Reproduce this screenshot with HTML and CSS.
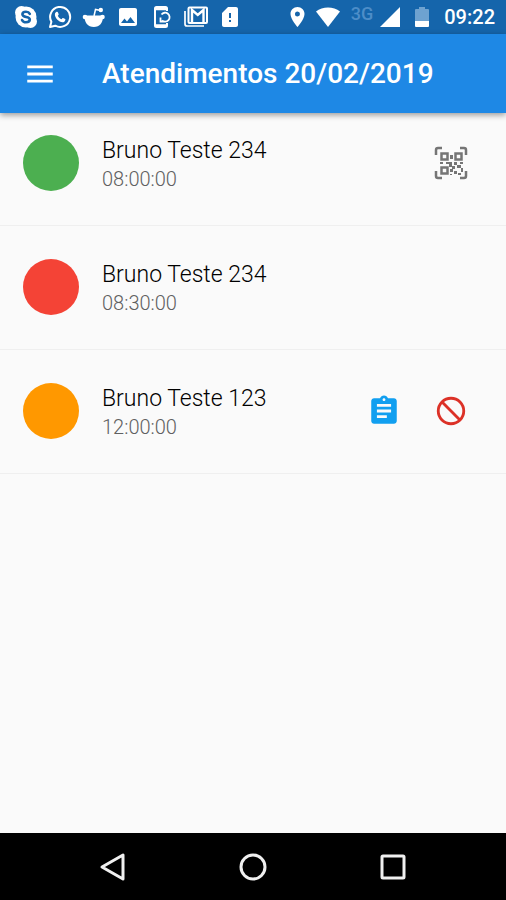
FILE: index.html
```html
<!DOCTYPE html>
<html lang="pt-BR">
<head>
<meta charset="utf-8">
<meta name="viewport" content="width=device-width, initial-scale=1">
<title>Atendimentos</title>
<link rel="stylesheet" href="styles.css">
</head>
<body>
<div class="statusbar">
	<div class="notifications">
		<!-- skype -->
		<svg viewBox="0 0 24 24"><circle cx="7.500" cy="7.500" r="6.500" fill="#fff"/><circle cx="16.500" cy="16.500" r="6.500" fill="#fff"/><circle cx="12" cy="12" r="10.500" fill="#fff"/><path d="M15.800 8.800C15 7.300 13.700 6.800 12 6.800c-2.200 0-3.600 1-3.600 2.500 0 3.800 7.400 1.800 7.400 5.300 0 1.700-1.700 2.700-3.800 2.700-2 0-3.300-.7-4-2.300" fill="none" stroke="#1565ab" stroke-width="2.600" stroke-linecap="round"/></svg>
		<!-- whatsapp -->
		<svg viewBox="0 0 24 24"><path d="M2 22l1.400-5.200A10 10 0 1 1 7.300 20.700z" fill="none" stroke="#fff" stroke-width="2" stroke-linejoin="round"/><path d="M8.800 6.800c.5-.2.900 0 1.100.4l.8 2c.1.400-.3.900-.9 1.500.9 1.700 2.100 2.800 3.800 3.600.7-.8 1.100-1.400 1.500-1.200l2.100 1c.7.400-.1 2.300-1.200 2.800-4 1.500-9.500-4-9.100-7.700.1-1.100.9-2.100 1.900-2.400z" fill="#fff"/></svg>
		<!-- reddit -->
		<svg viewBox="0 0 24 24" fill="#fff"><path d="M2.500 10.500h18.500c.3 7-3.300 11.500-9.200 11.500S2.200 17.500 2.500 10.500z"/><circle cx="3" cy="12" r="2.300"/><circle cx="20.500" cy="12" r="2.300"/><path d="M12 11l1.500-6.500 4 .8" fill="none" stroke="#fff" stroke-width="1.500"/><circle cx="18.800" cy="5" r="2.200"/></svg>
		<!-- image -->
		<svg viewBox="0 0 24 24" fill="#fff"><path d="M21 19V5c0-1.100-.9-2-2-2H5c-1.100 0-2 .9-2 2v14c0 1.100.9 2 2 2h14c1.100 0 2-.9 2-2zM8.500 13.500l2.500 3.010L14.500 12l4.500 6H5l3.500-4.500z"/></svg>
		<!-- phone sync -->
		<svg viewBox="0 0 24 24" fill="none" stroke="#fff" stroke-width="2"><path d="M17 6V3.500c0-1-.5-1.500-1.500-1.500h-9C5.500 2 5 2.500 5 3.500v17c0 1 .5 1.500 1.500 1.500h9c1 0 1.500-.5 1.500-1.500V18"/><path d="M5 4h12M5 20.500h12" stroke-width="2.500"/><path d="M11.500 9.500A4.500 4.500 0 1 1 12 15.500M10.500 12.500v4h4" stroke-width="1.800"/></svg>
		<!-- gmail -->
		<svg viewBox="0 0 24 24" fill="none" stroke="#fff" stroke-width="2"><path d="M1 6v13c0 1.500.5 2 2 2h17" stroke-width="1.700"/><rect x="4.500" y="2.500" width="18.500" height="15.500" rx="1"/><path d="M8 18V5l5.750 5L19.500 5v13" stroke-width="2.400"/></svg>
		<!-- sd card -->
		<svg viewBox="0 0 24 24" fill="#fff"><path d="M18 2h-8L4 8v12c0 1.100.9 2 2 2h12c1.100 0 2-.9 2-2V4c0-1.100-.9-2-2-2zm-5 15h-2v-2h2v2zm0-4h-2V8h2v5z"/></svg>
	</div>
	<div class="system">
		<svg class="pin" viewBox="5 2 14 20" fill="#fff"><path d="M12 2C8.130 2 5 5.130 5 9c0 5.250 7 13 7 13s7-7.750 7-13c0-3.870-3.130-7-7-7zm0 9.500a2.500 2.500 0 1 1 0-5 2.500 2.500 0 0 1 0 5z"/></svg>
		<svg class="wifi" viewBox="0 0 24 20" fill="#fff"><path d="M12 20L0 4.500C6.500-1 17.500-1 24 4.500z"/></svg>
		<span class="network">3G</span>
		<svg class="signal" viewBox="0 0 20 20" fill="#fff"><path d="M0 20L20 0v20z"/></svg>
		<svg class="battery" viewBox="0 0 14 20"><path d="M4 0h6v2h3q1 0 1 1v11H0V3q0-1 1-1h3z" fill="#6ea2d0"/><path d="M0 14h14v5q0 1-1 1H1q-1 0-1-1z" fill="#fff"/></svg>
		<span class="clock">09:22</span>
	</div>
</div>

<header class="appbar">
	<button class="menu" type="button" aria-label="Menu">
		<svg viewBox="0 0 24 24" fill="#fff"><path d="M3 18h18v-2H3v2zm0-5h18v-2H3v2zm0-7v2h18V6H3z"/></svg>
	</button>
	<h1>Atendimentos 20/02/2019</h1>
</header>

<main>
<ul class="list">
	<li class="item">
		<span class="status green"></span>
		<div class="info">
			<span class="name">Bruno Teste 234</span>
			<span class="hour">08:00:00</span>
		</div>
		<div class="actions">
			<button type="button" aria-label="Ler QR code">
				<svg viewBox="0 0 34 34" fill="none" stroke="#757575" stroke-width="2.500">
					<path d="M2 9V4q0-2 2-2h4M26 2h4q2 0 2 2v5M32 25v5q0 2-2 2h-4M8 32H4q-2 0-2-2v-5"/>
					<path d="M7.500 7.500h6v6h-6zM21.500 7.500h6v6h-6zM7.500 21.500h6v6h-6z"/>
					<g fill="#757575" stroke="none"><path d="M16 9h3v4h-3zM6 16h3v2H6zM12 16h6v2h-6zM15 18h3v3h-3zM20 16h3v3h-3zM26 16h3v2h-3zM18 20h3v3h-3zM23 19h4v3h-4zM16 23h3v3h-3zM20 25h3v3h-3zM27 22h2v4h-2zM24 27h3v2h-3zM16 28h2v1h-2z"/></g>
				</svg>
			</button>
		</div>
	</li>
	<li class="item">
		<span class="status red"></span>
		<div class="info">
			<span class="name">Bruno Teste 234</span>
			<span class="hour">08:30:00</span>
		</div>
	</li>
	<li class="item">
		<span class="status orange"></span>
		<div class="info">
			<span class="name">Bruno Teste 123</span>
			<span class="hour">12:00:00</span>
		</div>
		<div class="actions">
			<button type="button" aria-label="Detalhes">
				<svg viewBox="0 0 24 24" fill="#119ff0"><path d="M19 3h-4.180C14.400 1.840 13.300 1 12 1s-2.400.84-2.820 2H5c-1.100 0-2 .9-2 2v14c0 1.100.9 2 2 2h14c1.100 0 2-.9 2-2V5c0-1.100-.9-2-2-2zm-7 0c.55 0 1 .45 1 1s-.45 1-1 1-1-.45-1-1 .45-1 1-1zm2 14H7v-2h7v2zm3-4H7v-2h10v2zm0-4H7V7h10v2z"/></svg>
			</button>
			<button type="button" aria-label="Cancelar">
				<svg viewBox="0 0 24 24" fill="none" stroke="#dc3127" stroke-width="2"><circle cx="12" cy="12" r="9"/><path d="M5.700 5.700l12.600 12.600"/></svg>
			</button>
		</div>
	</li>
</ul>
</main>

<nav class="navbar">
	<button type="button" aria-label="Voltar"><svg viewBox="0 0 34 34"><path d="M6 17L27 5v24z"/></svg></button>
	<button type="button" aria-label="Início"><svg viewBox="0 0 34 34"><circle cx="17" cy="17" r="12"/></svg></button>
	<button type="button" aria-label="Recentes"><svg viewBox="0 0 34 34"><rect x="6" y="6" width="22" height="22" rx="1"/></svg></button>
</nav>
</body>
</html>
```
FILE: styles.css
```css
* {
	box-sizing: border-box;
}

body {
	margin: 0;
	min-height: 100vh;
	display: flex;
	flex-direction: column;
	background-color: #fafafa;
	font-family: Roboto, "Liberation Sans", sans-serif;
}

button {
	padding: 0;
	border: none;
	background: none;
	cursor: pointer;
}

svg {
	display: block;
	flex-shrink: 0;
}

.statusbar {
	height: 34px;
	padding: 0 11px 0 14px;
	display: flex;
	justify-content: space-between;
	align-items: center;
	background-color: #1565ab;
	color: #fff;
}

.notifications {
	display: flex;
	gap: 10px;
}
.notifications svg {
	width: 24px;
	height: 24px;
}

.system {
	display: flex;
	align-items: center;
	gap: 11px;
}
.pin {
	width: 15px;
	height: 20px;
}
.wifi {
	width: 24px;
	height: 20px;
}
.signal {
	width: 20px;
	height: 20px;
}
.battery {
	width: 14px;
	height: 20px;
	margin: 0 4px;
}
.network {
	align-self: flex-start;
	margin-right: -4px;
	font-size: 18px;
	font-weight: 500;
	line-height: 18px;
	color: #4d8dc8;
}
.clock {
	font-size: 20px;
	font-weight: 500;
}

.appbar {
	height: 79px;
	padding: 0 23px;
	display: flex;
	align-items: center;
	gap: 45px;
	background-color: #1e88e5;
	color: #fff;
	box-shadow: 0 2px 6px rgba(0, 0, 0, 0.4);
}
.appbar h1 {
	margin: 0;
	font-size: 28px;
	font-weight: 500;
	line-height: 36px;
}
.menu svg,
.actions svg,
.navbar svg {
	width: 34px;
	height: 34px;
}

main {
	flex: 1;
}

.list {
	margin: 0;
	padding: 0;
	list-style: none;
}
.item {
	display: flex;
	align-items: center;
	padding: 33px 22px 34px 23px;
	border-bottom: 1px solid #efefef;
}
.item:first-child {
	padding-top: 22px;
}

.status {
	width: 56px;
	height: 56px;
	border-radius: 50%;
}
.green {
	background-color: #4caf50;
}
.red {
	background-color: #f44336;
}
.orange {
	background-color: #ff9800;
}

.info {
	flex: 1;
	margin-left: 23px;
	display: flex;
	flex-direction: column;
	font-weight: 300;
}
.name {
	font-size: 23px;
	line-height: 32px;
	color: #000;
}
.hour {
	font-size: 20px;
	line-height: 24px;
	color: #606060;
}

.actions {
	display: flex;
}
.actions button {
	width: 67px;
	height: 56px;
	display: flex;
	align-items: center;
	justify-content: center;
}

.navbar {
	height: 67px;
	display: flex;
	justify-content: center;
	background-color: #000;
}
.navbar button {
	width: 140px;
	display: flex;
	align-items: center;
	justify-content: center;
}
.navbar svg {
	fill: none;
	stroke: #f0f0f0;
	stroke-width: 3;
	stroke-linejoin: round;
}
```
